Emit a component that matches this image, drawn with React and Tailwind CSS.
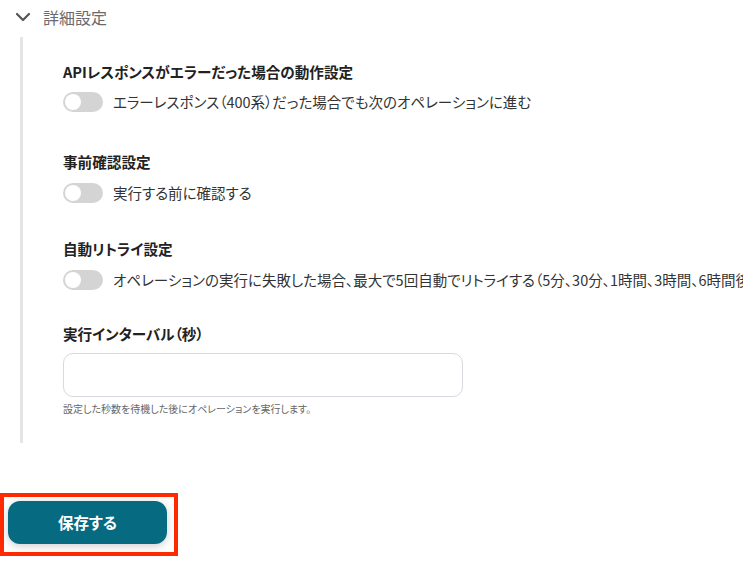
import React from "react";

function Toggle() {
  return (
    <div className="relative w-[40px] h-[20px] rounded-full bg-[#d4d4d4] shrink-0">
      <div className="absolute left-[2px] top-[2px] w-[16px] h-[16px] rounded-full bg-white" />
    </div>
  );
}

function ToggleRow({ label }) {
  return (
    <div className="flex items-center gap-[10px] whitespace-nowrap">
      <Toggle />
      <span className="text-[14.5px] leading-[20px] text-[#333]">{label}</span>
    </div>
  );
}

export default function App() {
  return (
    <div
      className="w-[743px] h-[584px] bg-white overflow-hidden text-[#222] [font-feature-settings:'palt']"
      style={{ fontFamily: '"Noto Sans CJK JP", "Noto Sans", sans-serif' }}
    >
      <div className="flex items-center h-[34px] pl-[15px] gap-[12px]">
        <svg width="16" height="10" viewBox="0 0 16 10" fill="none" stroke="#555" strokeWidth="2.2" strokeLinecap="round" strokeLinejoin="round">
          <path d="M2 2l6 6 6-6" />
        </svg>
        <span className="text-[16px] text-[#6b6b6b] leading-[20px]">詳細設定</span>
      </div>
      <div className="ml-[20px] mt-[3px] border-l-[3px] border-[#e5e5e5] pl-[40px] pt-[25px] pb-[27px]">
        <div className="text-[14.6px] leading-[20px] font-bold">APIレスポンスがエラーだった場合の動作設定</div>
        <div className="mt-[10px]">
          <ToggleRow label="エラーレスポンス（400系）だった場合でも次のオペレーションに進む" />
        </div>
        <div className="mt-[40px] text-[14.6px] leading-[20px] font-bold">事前確認設定</div>
        <div className="mt-[11px]">
          <ToggleRow label="実行する前に確認する" />
        </div>
        <div className="mt-[36px] text-[14.6px] leading-[20px] font-bold">自動リトライ設定</div>
        <div className="mt-[11px]">
          <ToggleRow label="オペレーションの実行に失敗した場合、最大で5回自動でリトライする（5分、30分、1時間、3時間、6時間後）" />
        </div>
        <div className="mt-[34px] text-[14.6px] leading-[20px] font-bold">実行インターバル（秒）</div>
        <div className="mt-[9px] w-[400px] h-[44px] rounded-[10px] border border-[#d6d9de] bg-white" />
        <div className="mt-[5px] text-[10px] leading-[14px] text-[#666]">設定した秒数を待機した後にオペレーションを実行します。</div>
      </div>
      <div className="mt-[50px] ml-0 w-[178px] h-[63px] border-[4px] border-[#ff2a00] p-[4px]">
        <button className="w-[159px] h-[43px] rounded-[12px] bg-[#066a80] text-white text-[15.5px] font-bold shadow-[0_2px_8px_rgba(0,0,0,0.2)]">
          保存する
        </button>
      </div>
    </div>
  );
}
